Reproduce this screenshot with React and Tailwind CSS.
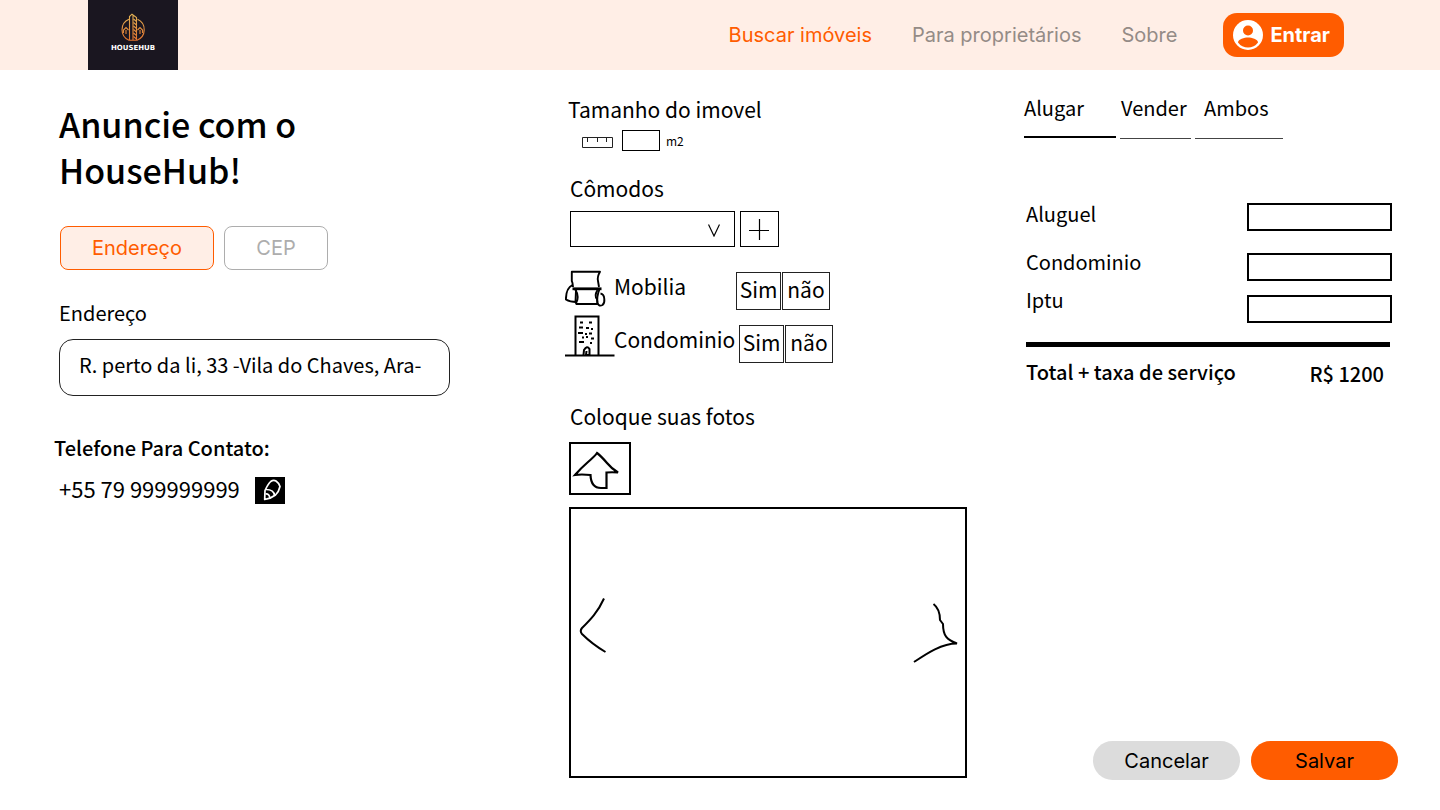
import React, { useState } from "react";

const small = "text-xl leading-7";
const medium = "text-[21px] leading-7";

function Logo() {
  return (
    <a
      href="#inicio"
      aria-label="HouseHub"
      className="flex h-[70px] w-[90px] flex-col items-center bg-[#1a1620] pt-[13px]"
    >
      <svg width="26" height="29" viewBox="0 0 26 29" fill="none" aria-hidden="true">
        <defs>
          <linearGradient id="gold" gradientUnits="userSpaceOnUse" x1="0" y1="1" x2="0" y2="28">
            <stop offset="0" stopColor="#e3b456" />
            <stop offset="1" stopColor="#e2702c" />
          </linearGradient>
        </defs>
        <g stroke="url(#gold)" strokeWidth="1.1">
          <path d="M9 6.2A11.4 11.4 0 0 0 9 27.2H17A11.4 11.4 0 0 0 17.5 6.2" />
          <path d="M9.500 27V3.500L12 1.200L16.500 4.500V27M13 2V27" />
          <path d="M13.500 6l3 2.500M13.500 9.500l3 2.500M13.500 13l3 2.500M13.500 16.500l3 2.500M13.500 20l3 2.500M13.500 23.500l3 2.500" />
          <path d="M3.500 20V17L6 14.500L8.500 17M6 17V21M17.500 17L20 14.500L22.500 17V20M20 17V21" />
        </g>
      </svg>
      <span className="mt-0.5 font-['DejaVu_Sans',sans-serif] text-[7px] leading-[9px] font-bold text-white">
        HOUSEHUB
      </span>
    </a>
  );
}

function Header() {
  return (
    <header className="flex h-[70px] items-center justify-between bg-[#ffeee6] pr-24 pl-[88px] font-[Inter,sans-serif]">
      <Logo />
      <nav className="flex items-center gap-10 text-xl text-[#948b86]">
        <a href="#buscar" className="text-[#ff5c00]">Buscar imóveis</a>
        <a href="#proprietarios">Para proprietários</a>
        <a href="#sobre">Sobre</a>
        <button
          type="button"
          className="ml-1.5 flex h-11 items-center gap-[7px] rounded-[14px] bg-[#ff5c00] pr-3.5 pl-2.5 font-bold text-white"
        >
          <svg width="30" height="30" viewBox="0 0 30 30" aria-hidden="true">
            <circle cx="15" cy="15" r="15" fill="#fff" />
            <circle cx="15" cy="10.5" r="5" fill="#ff5c00" />
            <path d="M5 22.4C5 19.2 11.5 17.4 15 17.4S25 19.2 25 22.4A12.3 12.3 0 0 1 5 22.4Z" fill="#ff5c00" />
          </svg>
          Entrar
        </button>
      </nav>
    </header>
  );
}

function AddressColumn() {
  return (
    <section className="flex flex-col pt-[7px]">
      <div className="pl-[5px]">
        <h1 className="text-[34px] leading-[46px] font-medium">
          Anuncie com o
          <br />
          HouseHub!
        </h1>
        <div className="mt-[33px] flex gap-2.5 pl-[1px] font-[Inter,sans-serif] text-xl">
          <button type="button" className="h-11 w-[154px] rounded-lg border border-[#ff5c00] bg-[#ffeee6] text-[#ff5c00]">
            Endereço
          </button>
          <button type="button" className="h-11 w-[104px] rounded-lg border border-[#adadad] text-[#adadad]">
            CEP
          </button>
        </div>
        <label htmlFor="endereco" className={`mt-[29px] block ${small}`}>
          Endereço
        </label>
        <input
          id="endereco"
          defaultValue="R. perto da li, 33 -Vila do Chaves, Ara-"
          className="mt-3 h-[57px] w-full max-w-[391px] rounded-[14px] border border-[#222] px-[19px] pb-1.5 text-xl"
        />
      </div>
      <h2 className={`mt-[38px] font-medium ${small}`}>Telefone Para Contato:</h2>
      <div className="mt-[9px] flex items-center gap-[15px] pl-[5px]">
        <span className="text-[22px] leading-7">+55 79 999999999</span>
        <button type="button" aria-label="Editar telefone" className="mt-1.5 bg-black">
          <svg width="30" height="27" viewBox="0 0 30 27" fill="none" stroke="#fff" strokeWidth="1.7" strokeLinejoin="round">
            <path d="M9.700 22.500L10 13.500Q13 7 15.700 4.500Q18.500 2.500 21 4Q24.500 6.500 25 9.500Q24 14.500 20.500 18Q16 21.500 9.700 22.500Z" />
            <path d="M11 12.500Q19 12.500 19.500 18.500M10.500 17Q14.500 16.500 15 21.500" />
          </svg>
        </button>
      </div>
    </section>
  );
}

function SofaIcon() {
  return (
    <svg width="49" height="38" viewBox="0 0 49 38" fill="none" stroke="#000" strokeWidth="1.9" strokeLinejoin="round" aria-hidden="true">
      <path d="M8 17L7.500 13L6.800 11V1.800H35Q32 7 33 11L34 17" />
      <path strokeWidth="2.800" d="M7.500 18.800H36.500" />
      <path d="M7.500 15Q1 18 .9 29.500Q5 32 11.500 32Q14.500 26 10 19" />
      <path d="M11 20L10.500 32L11.500 34H32.500L32 29Q29 26 32.500 20" />
      <path d="M34.500 19Q31.500 27 32.500 33Q34 37 37.500 35Q39.800 33 39.300 29Q39 24 35.500 23.500" />
    </svg>
  );
}

function BuildingIcon() {
  return (
    <svg width="49" height="42" viewBox="0 0 49 42" fill="none" stroke="#000" strokeWidth="2" className="overflow-visible" aria-hidden="true">
      <path d="M0 40.500H49.500M10.500 40V1.500H33.500V40" />
      <path
        strokeWidth="1.800"
        d="M15 7.500h3M24 7.500h3M14 12.500h4M21 13h3M26 14h2M13 18h5M20 19h2M24 18.500h3M17 22.500h2M21 22h2M26 23.500h3M14 27h5M25 28h2"
      />
      <path d="M18.500 40L19 35Q22 30 24.500 34V40H21L21.500 36" />
    </svg>
  );
}

function Choice({ pressed, onClick, className, children }) {
  return (
    <button
      type="button"
      aria-pressed={pressed}
      onClick={onClick}
      className={`h-[38px] border border-[#222] pb-1 text-[21px] leading-7 ${className}`}
    >
      {children}
    </button>
  );
}

function YesNo({ name, className }) {
  const [value, setValue] = useState(null);
  return (
    <div role="group" aria-label={name} className={`flex gap-[1px] ${className}`}>
      <Choice pressed={value === true} onClick={() => setValue(true)} className="w-[45px]">
        Sim
      </Choice>
      <Choice pressed={value === false} onClick={() => setValue(false)} className="w-12">
        não
      </Choice>
    </div>
  );
}

function PropertyColumn() {
  return (
    <section className="flex flex-col pt-[1px] pr-[57px]">
      <div className="pl-[3px]">
        <label htmlFor="tamanho" className={`block ${medium}`}>
          Tamanho do imovel
        </label>
        <div className="mt-[7px] flex items-center pl-3.5">
          <svg width="31" height="11" viewBox="0 0 31 11" fill="none" stroke="#222" className="mt-1" aria-hidden="true">
            <path d="M.5 .5H30.500V10.500H.5ZM5.500 1V5M15.500 1V5M24.500 1V5" />
          </svg>
          <input id="tamanho" className="ml-[9px] h-[21px] w-[38px] border border-black px-1 text-xs" />
          <span className="ml-1.5 text-xs">m2</span>
        </div>
      </div>

      <div className="mt-[23px] pl-[5px]">
        <label htmlFor="comodos" className={`block ${medium}`}>
          Cômodos
        </label>
        <div className="mt-[9px] flex gap-[5px]">
          <div className="relative">
            <select id="comodos" defaultValue="" className="block h-9 w-[165px] appearance-none border border-black px-2 text-lg">
              <option value=""></option>
              <option>Quarto</option>
              <option>Sala</option>
              <option>Cozinha</option>
            </select>
            <svg
              width="12"
              height="13"
              viewBox="0 0 12 13"
              fill="none"
              stroke="#000"
              strokeWidth="1.200"
              className="pointer-events-none absolute top-[13px] right-[15px]"
              aria-hidden="true"
            >
              <path d="M.5 .5L6 12L11.500 .5" />
            </svg>
          </div>
          <button type="button" aria-label="Adicionar cômodo" className="flex h-9 w-[39px] items-center justify-center border border-black">
            <svg width="21" height="21" viewBox="0 0 21 21" stroke="#000" strokeWidth="1.200">
              <path d="M0 11.500H20M10.500 0V21" />
            </svg>
          </button>
        </div>
      </div>

      <div className="mt-[23px] flex items-start">
        <SofaIcon />
        <span className={`w-[122px] pt-0.5 ${medium}`}>Mobilia</span>
        <YesNo name="Mobilia" className="pt-0.5" />
      </div>
      <div className="mt-[5px] flex items-start">
        <BuildingIcon />
        <span className={`w-[125px] pt-2.5 ${medium}`}>Condominio</span>
        <YesNo name="Condominio" className="pt-2.5" />
      </div>

      <div className="mt-[39px] pl-1">
        <h2 className={`pl-[1px] ${medium}`}>Coloque suas fotos</h2>
        <button type="button" aria-label="Enviar fotos" className="mt-3 block h-[53px] w-[62px] border-2 border-black">
          <svg width="58" height="49" viewBox="0 0 58 49" fill="none" stroke="#000" strokeWidth="2.2" aria-hidden="true">
            <path d="M26 9Q24 12 17 18Q9 25 4 31Q10 30 19.500 31Q20 44 30 44H35.500V28.500Q41 28 47 28.500Q40 24 36 19Q30 12 26 9Z" />
          </svg>
        </button>
        <div className="mt-3 mb-0.5 flex h-[271px] items-start justify-between border-2 border-black">
          <button type="button" aria-label="Foto anterior" className="mt-[89px] ml-2">
            <svg width="28" height="56" viewBox="0 0 28 56" fill="none" stroke="#000" strokeWidth="2">
              <path d="M25 .5C19 14 11 22 3 30Q.5 33 3 36Q13 46 26.500 54" />
            </svg>
          </button>
          <button type="button" aria-label="Próxima foto" className="mt-[94px] mr-1.5">
            <svg width="46" height="62" viewBox="0 0 46 62" fill="none" stroke="#000" strokeWidth="2">
              <path d="M20.500 1Q27 6 27 17L30 21C30 33 34 37 44 40.500C28 40.500 13 51 1 59" />
            </svg>
          </button>
        </div>
      </div>
    </section>
  );
}

function CostField({ id, label, rowClass, fieldClass }) {
  return (
    <div className={`flex items-start justify-between ${rowClass}`}>
      <label htmlFor={id} className={small}>
        {label}
      </label>
      <input id={id} className={`h-7 w-[145px] border-2 border-black px-2 text-base ${fieldClass}`} />
    </div>
  );
}

function PriceColumn() {
  return (
    <section className="flex flex-col">
      <div className={`flex gap-1 ${small}`}>
        <button type="button" className="h-11 w-[92px] border-b-2 border-black pb-4 text-left">
          Alugar
        </button>
        <button type="button" className="h-[45px] w-[71px] border-b border-[#444] pb-[18px] pl-[1px] text-left">
          Vender
        </button>
        <button type="button" className="h-[45px] w-[88px] border-b border-[#444] pb-[18px] pl-[9px] text-left">
          Ambos
        </button>
      </div>

      <div className="mt-[61px] pr-2 pl-0.5">
        <CostField id="aluguel" label="Aluguel" rowClass="" fieldClass="mt-[3px]" />
        <CostField id="condominio" label="Condominio" rowClass="mt-[17px]" fieldClass="mt-[5px]" />
        <CostField id="iptu" label="Iptu" rowClass="mt-[5px]" fieldClass="mt-[9px]" />
        <hr className="mt-[19px] mr-0.5 border-t-[5px] border-black" />
        <div className={`mt-[11px] flex items-start justify-between pr-2 font-medium ${small}`}>
          <span>Total + taxa de serviço</span>
          <span className="pt-0.5">R$ 1200</span>
        </div>
      </div>

      <div className="mt-auto flex justify-end gap-[11px] pt-10 pr-0.5 font-[Inter,sans-serif] text-xl">
        <button type="button" className="h-[39px] w-[147px] rounded-full bg-[#dcdcdc]">
          Cancelar
        </button>
        <button type="button" className="h-[39px] w-[147px] rounded-full bg-[#ff5c00]">
          Salvar
        </button>
      </div>
    </section>
  );
}

export default function App() {
  return (
    <div className="min-h-screen bg-white font-['Noto_Sans_CJK_SC',sans-serif] text-black">
      <Header />
      <main className="grid grid-cols-[511fr_459fr_376fr] pt-6 pr-10 pb-[30px] pl-[54px]">
        <AddressColumn />
        <PropertyColumn />
        <PriceColumn />
      </main>
    </div>
  );
}
